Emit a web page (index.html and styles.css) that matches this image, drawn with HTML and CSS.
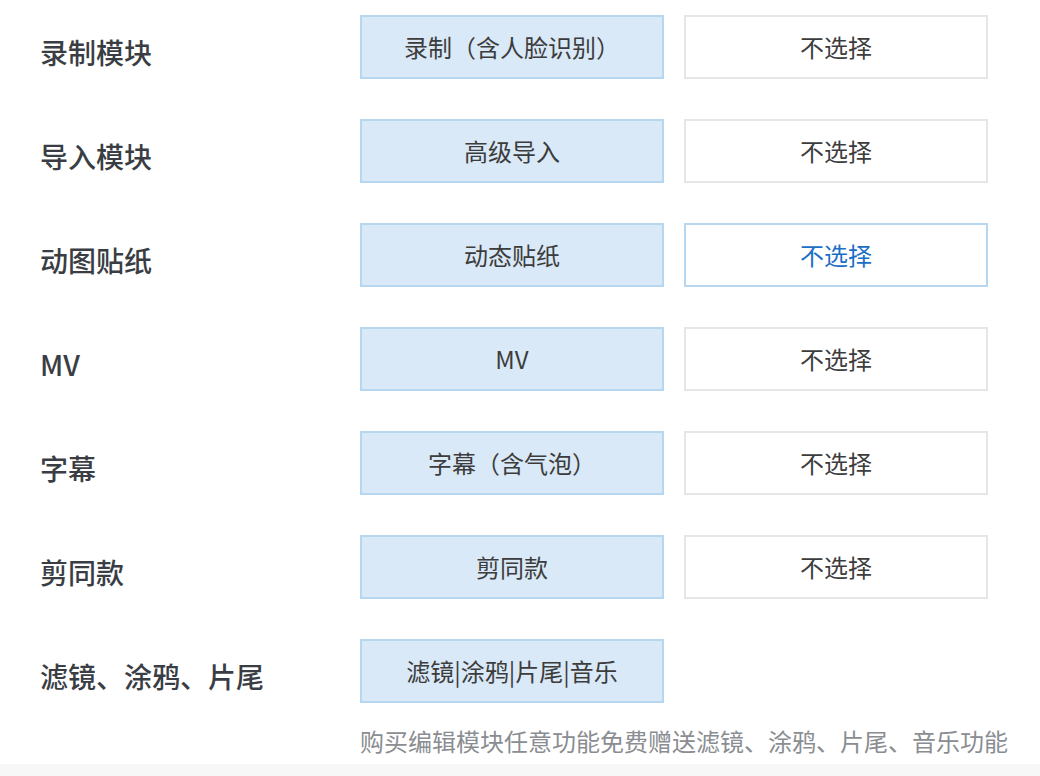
FILE: index.html
```html
<!DOCTYPE html>
<html lang="zh-CN">
<head>
  <meta charset="UTF-8">
  <title>模块选择</title>
  <link rel="stylesheet" href="styles.css">
</head>
<body>
  <div class="page">
    <div class="row">
      <div class="label">录制模块</div>
      <div class="opts">
        <div class="opt on">录制（含人脸识别）</div>
        <div class="opt">不选择</div>
      </div>
    </div>
    <div class="row">
      <div class="label">导入模块</div>
      <div class="opts">
        <div class="opt on">高级导入</div>
        <div class="opt">不选择</div>
      </div>
    </div>
    <div class="row">
      <div class="label">动图贴纸</div>
      <div class="opts">
        <div class="opt on">动态贴纸</div>
        <div class="opt focus">不选择</div>
      </div>
    </div>
    <div class="row">
      <div class="label">MV</div>
      <div class="opts">
        <div class="opt on">MV</div>
        <div class="opt">不选择</div>
      </div>
    </div>
    <div class="row">
      <div class="label">字幕</div>
      <div class="opts">
        <div class="opt on">字幕（含气泡）</div>
        <div class="opt">不选择</div>
      </div>
    </div>
    <div class="row">
      <div class="label">剪同款</div>
      <div class="opts">
        <div class="opt on">剪同款</div>
        <div class="opt">不选择</div>
      </div>
    </div>
    <div class="row">
      <div class="label">滤镜、涂鸦、片尾</div>
      <div class="opts">
        <div class="opt on">滤镜|涂鸦|片尾|音乐</div>
      </div>
    </div>
    <p class="note">购买编辑模块任意功能免费赠送滤镜、涂鸦、片尾、音乐功能</p>
  </div>
</body>
</html>
```

FILE: styles.css
```css
/* 页面 */
body { margin:0; background:#f7f7f7; font-family:"Noto Sans CJK SC", "Noto Sans", sans-serif; color:#333; }
.page { background:#fff; padding:15px 0 5px 40px; display:flex; flex-direction:column; gap:40px; }
/* 每一行 */
.row { display:flex; align-items:center; }
.label { width:320px; font-size:28px; font-weight:500; color:#3a3e44; padding-top:10px; line-height:40px; }
.opts { display:flex; gap:20px; }
.opt { width:300px; height:59px; padding-bottom:1px; border:2px solid #e6e6e6; background:#fff; font-size:24px; color:#3c3c3c; display:flex; justify-content:center; align-items:center; }
.opt.on { background:#d9e9f7; border-color:#b7d6f0; }
.opt.focus { border-color:#b7d6f0; color:#1a6fc4; }
/* 说明 */
.note { margin:-20px 0 0 320px; font-size:24px; line-height:36px; color:#8a8d91; }
```
